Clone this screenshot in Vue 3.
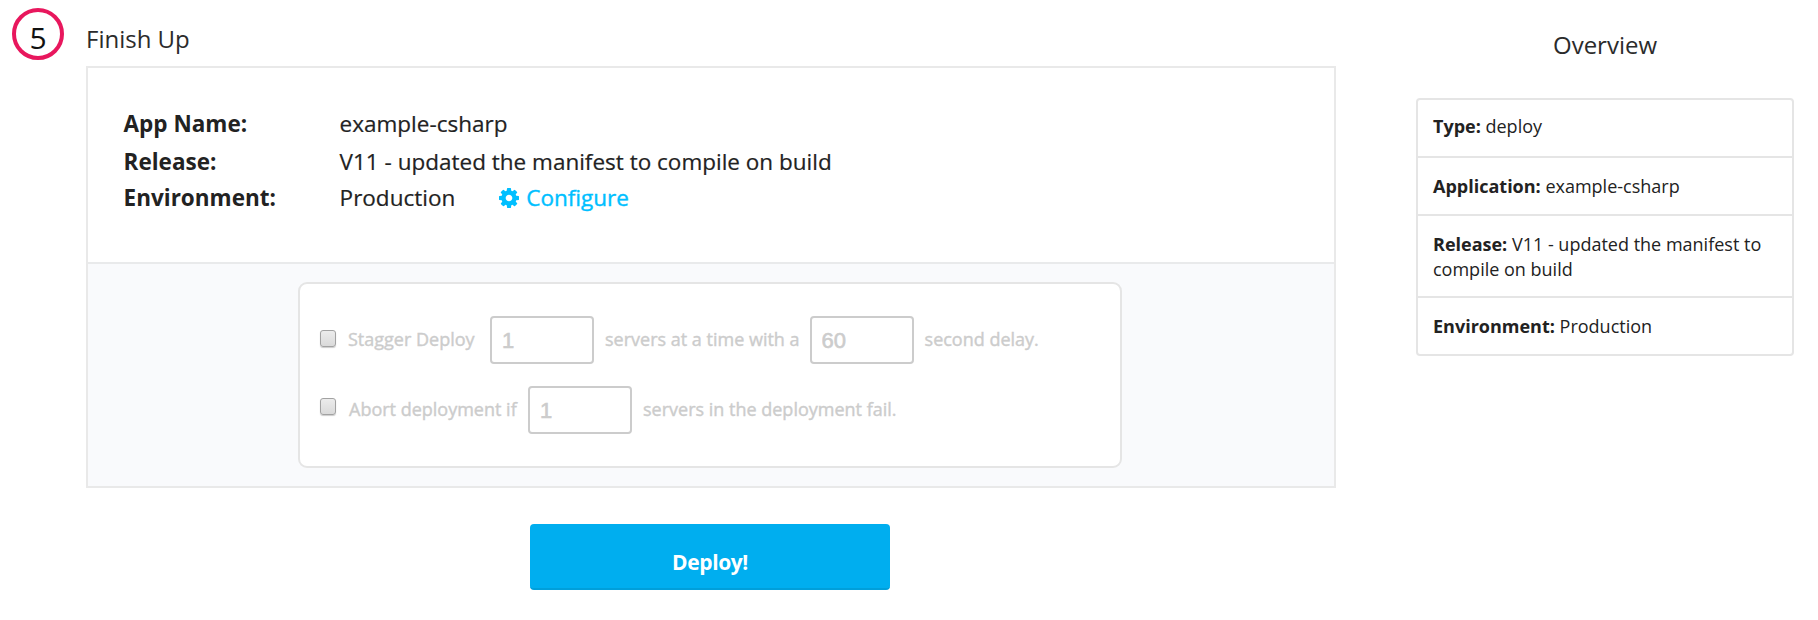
<script setup>
import { ref } from 'vue'

const stagger = ref(false)
const abort = ref(false)
const batch = ref('1')
const delay = ref('60')
const failures = ref('1')

const details = [
  { label: 'App Name:', value: 'example-csharp' },
  { label: 'Release:', value: 'V11 - updated the manifest to compile on build' },
  { label: 'Environment:', value: 'Production', configurable: true },
]

const overview = [
  { label: 'Type:', value: 'deploy' },
  { label: 'Application:', value: 'example-csharp' },
  { label: 'Release:', value: 'V11 - updated the manifest to compile on build' },
  { label: 'Environment:', value: 'Production' },
]
</script>

<template>
  <div class="page">
    <div class="step">5</div>

    <main class="main">
      <h2 class="title">Finish Up</h2>
      <section class="panel">
        <dl class="details">
          <div v-for="d in details" :key="d.label" class="detail">
            <dt>{{ d.label }}</dt>
            <dd>
              <span>{{ d.value }}</span>
              <a v-if="d.configurable" class="configure">
                <svg class="gear" viewBox="0 128 1536 1536">
                  <path fill="currentColor" d="M1024 896q0-106-75-181t-181-75-181 75-75 181 75 181 181 75 181-75 75-181zm512-109v222q0 12-8 23t-20 13l-185 28q-19 54-39 91 35 50 107 138 10 12 10 25t-9 23q-27 37-99 108t-94 71q-12 0-26-9l-138-108q-44 23-91 38-16 136-29 186-7 28-36 28h-222q-14 0-24.5-8.5t-11.5-21.5l-28-184q-49-16-90-37l-141 107q-10 9-25 9-14 0-25-11-126-114-165-168-7-10-7-23 0-12 8-23 15-21 51-66.5t54-70.5q-27-50-41-99l-183-27q-13-2-21-12.5t-8-23.5v-222q0-12 8-23t19-13l186-28q14-46 39-92-40-57-107-138-10-12-10-24 0-10 9-23 26-36 98.5-107.5t94.5-71.5q13 0 26 10l138 107q44-23 91-38 16-136 29-186 7-28 36-28h222q14 0 24.5 8.5t11.5 21.5l28 184q49 16 90 37l142-107q9-9 24-9 13 0 25 10 129 119 165 170 7 8 7 22 0 12-8 23-15 21-51 66.5t-54 70.5q26 50 41 98l183 28q13 2 21 12.5t8 23.5z" />
                </svg>
                <span>Configure</span>
              </a>
            </dd>
          </div>
        </dl>
        <div class="options-area">
          <div class="options">
            <div class="option">
              <input v-model="stagger" class="check" type="checkbox" />
              <span class="first">Stagger Deploy</span>
              <input v-model="batch" class="number" type="text" />
              <span class="after">servers at a time with a</span>
              <input v-model="delay" class="number" type="text" />
              <span class="after last">second delay.</span>
            </div>
            <div class="option">
              <input v-model="abort" class="check raised" type="checkbox" />
              <span class="first abort">Abort deployment if</span>
              <input v-model="failures" class="number" type="text" />
              <span class="after">servers in the deployment fail.</span>
            </div>
          </div>
        </div>
      </section>
      <button class="deploy">Deploy!</button>
    </main>

    <aside class="overview">
      <h2>Overview</h2>
      <ul>
        <li v-for="o in overview" :key="o.label"><b>{{ o.label }}</b> {{ o.value }}</li>
      </ul>
    </aside>
  </div>
</template>

<style>
body {
  margin: 0;
  background: #fff;
}
</style>

<style scoped>
.page {
  box-sizing: border-box;
  width: 1818px;
  height: 620px;
  padding-left: 12px;
  display: flex;
  align-items: flex-start;
  overflow: hidden;
  background: #fff;
  color: #222;
  font-family: "Open Sans", "Noto Sans", sans-serif;
}
h2 {
  margin: 0;
  font-size: 24px;
  font-weight: 400;
  color: #2b2b2b;
}
.step {
  box-sizing: border-box;
  width: 52px;
  height: 52px;
  margin: 8px 22px 0 0;
  padding-top: 4px;
  border: 4px solid #e8175d;
  border-radius: 50%;
  text-align: center;
  font-size: 30px;
  line-height: 44px;
  color: #111;
}
.main {
  width: 1250px;
  display: flex;
  flex-direction: column;
}
.title {
  height: 44px;
  padding-top: 22px;
  line-height: 33px;
}
.panel {
  border: 2px solid #e9e9e9;
}
.details {
  box-sizing: border-box;
  height: 194px;
  margin: 0;
  padding: 38px 35px 0 35.6px;
  display: flex;
  flex-direction: column;
}
.detail {
  display: flex;
  font-size: 22.5px;
  line-height: 36px;
}
.detail:first-child {
  margin-bottom: 2px;
}
dt {
  width: 216px;
  font-weight: 700;
}
dd {
  margin: 0;
  display: flex;
  -webkit-text-stroke: 0.2px currentColor;
}
.configure {
  display: flex;
  align-items: center;
  gap: 7px;
  margin-left: 44px;
  color: #00bfff;
  -webkit-text-stroke: 0.4px currentColor;
}
.gear {
  width: 20px;
  height: 20px;
}
.options-area {
  height: 224px;
  box-sizing: border-box;
  border-top: 2px solid #e9eaeb;
  padding: 18px 210px 0;
  background: #f9fafc;
}
.options {
  box-sizing: border-box;
  width: 824px;
  height: 186px;
  padding: 32px 20px 0;
  border: 2px solid #e5e5e5;
  border-radius: 9px;
  background: #fff;
  display: flex;
  flex-direction: column;
  gap: 22px;
}
.option {
  display: flex;
  align-items: center;
  height: 48px;
  font-size: 18px;
  line-height: 24px;
  color: #ccc;
  white-space: nowrap;
  -webkit-text-stroke: 0.4px #ccc;
}
.check {
  appearance: none;
  box-sizing: border-box;
  width: 16px;
  height: 17px;
  margin: 0 12px 3px 0;
  border: 1px solid #a2a2a2;
  border-radius: 3px;
  background: linear-gradient(#ececec, #dadada);
  box-shadow: 0 1px 1px #ccc;
}
.check.raised {
  margin-bottom: 7px;
}
.first,
.after {
  padding-bottom: 2px;
}
.first {
  width: 142px;
}
.first.abort {
  box-sizing: border-box;
  width: 180px;
  padding-left: 1px;
}
.number {
  box-sizing: border-box;
  width: 104px;
  height: 48px;
  padding: 2px 0 0 10px;
  border: 2px solid #ccc;
  border-radius: 4px;
  background: #fff;
  color: #ccc;
  font-family: "Liberation Sans", sans-serif;
  font-size: 22px;
  -webkit-text-stroke: 0.6px #ccc;
}
.after {
  margin: 0 10px 0 11px;
}
.deploy {
  align-self: center;
  box-sizing: border-box;
  width: 360px;
  height: 66px;
  margin: 36px 2px 0 0;
  padding: 11px 0 0;
  border: 0;
  border-bottom: 2px solid #009fda;
  border-radius: 4px;
  background: #00aeef;
  color: #fff;
  font-family: inherit;
  font-size: 21px;
  font-weight: 700;
  letter-spacing: -0.4px;
}
.overview {
  width: 378px;
  margin-left: 80px;
}
.overview h2 {
  height: 70px;
  padding-top: 28px;
  line-height: 33px;
  text-align: center;
}
.overview ul {
  margin: 0;
  padding: 0;
  list-style: none;
  border: 2px solid #e5e5e5;
  border-radius: 4px;
}
.overview li {
  padding: 16px 12px 15px 15px;
  font-size: 18px;
  line-height: 25px;
}
.overview li:first-child {
  padding-top: 14px;
  padding-bottom: 17px;
}
.overview li:nth-child(3) {
  padding-bottom: 14px;
}
.overview li + li {
  border-top: 2px solid #e5e5e5;
}
</style>
